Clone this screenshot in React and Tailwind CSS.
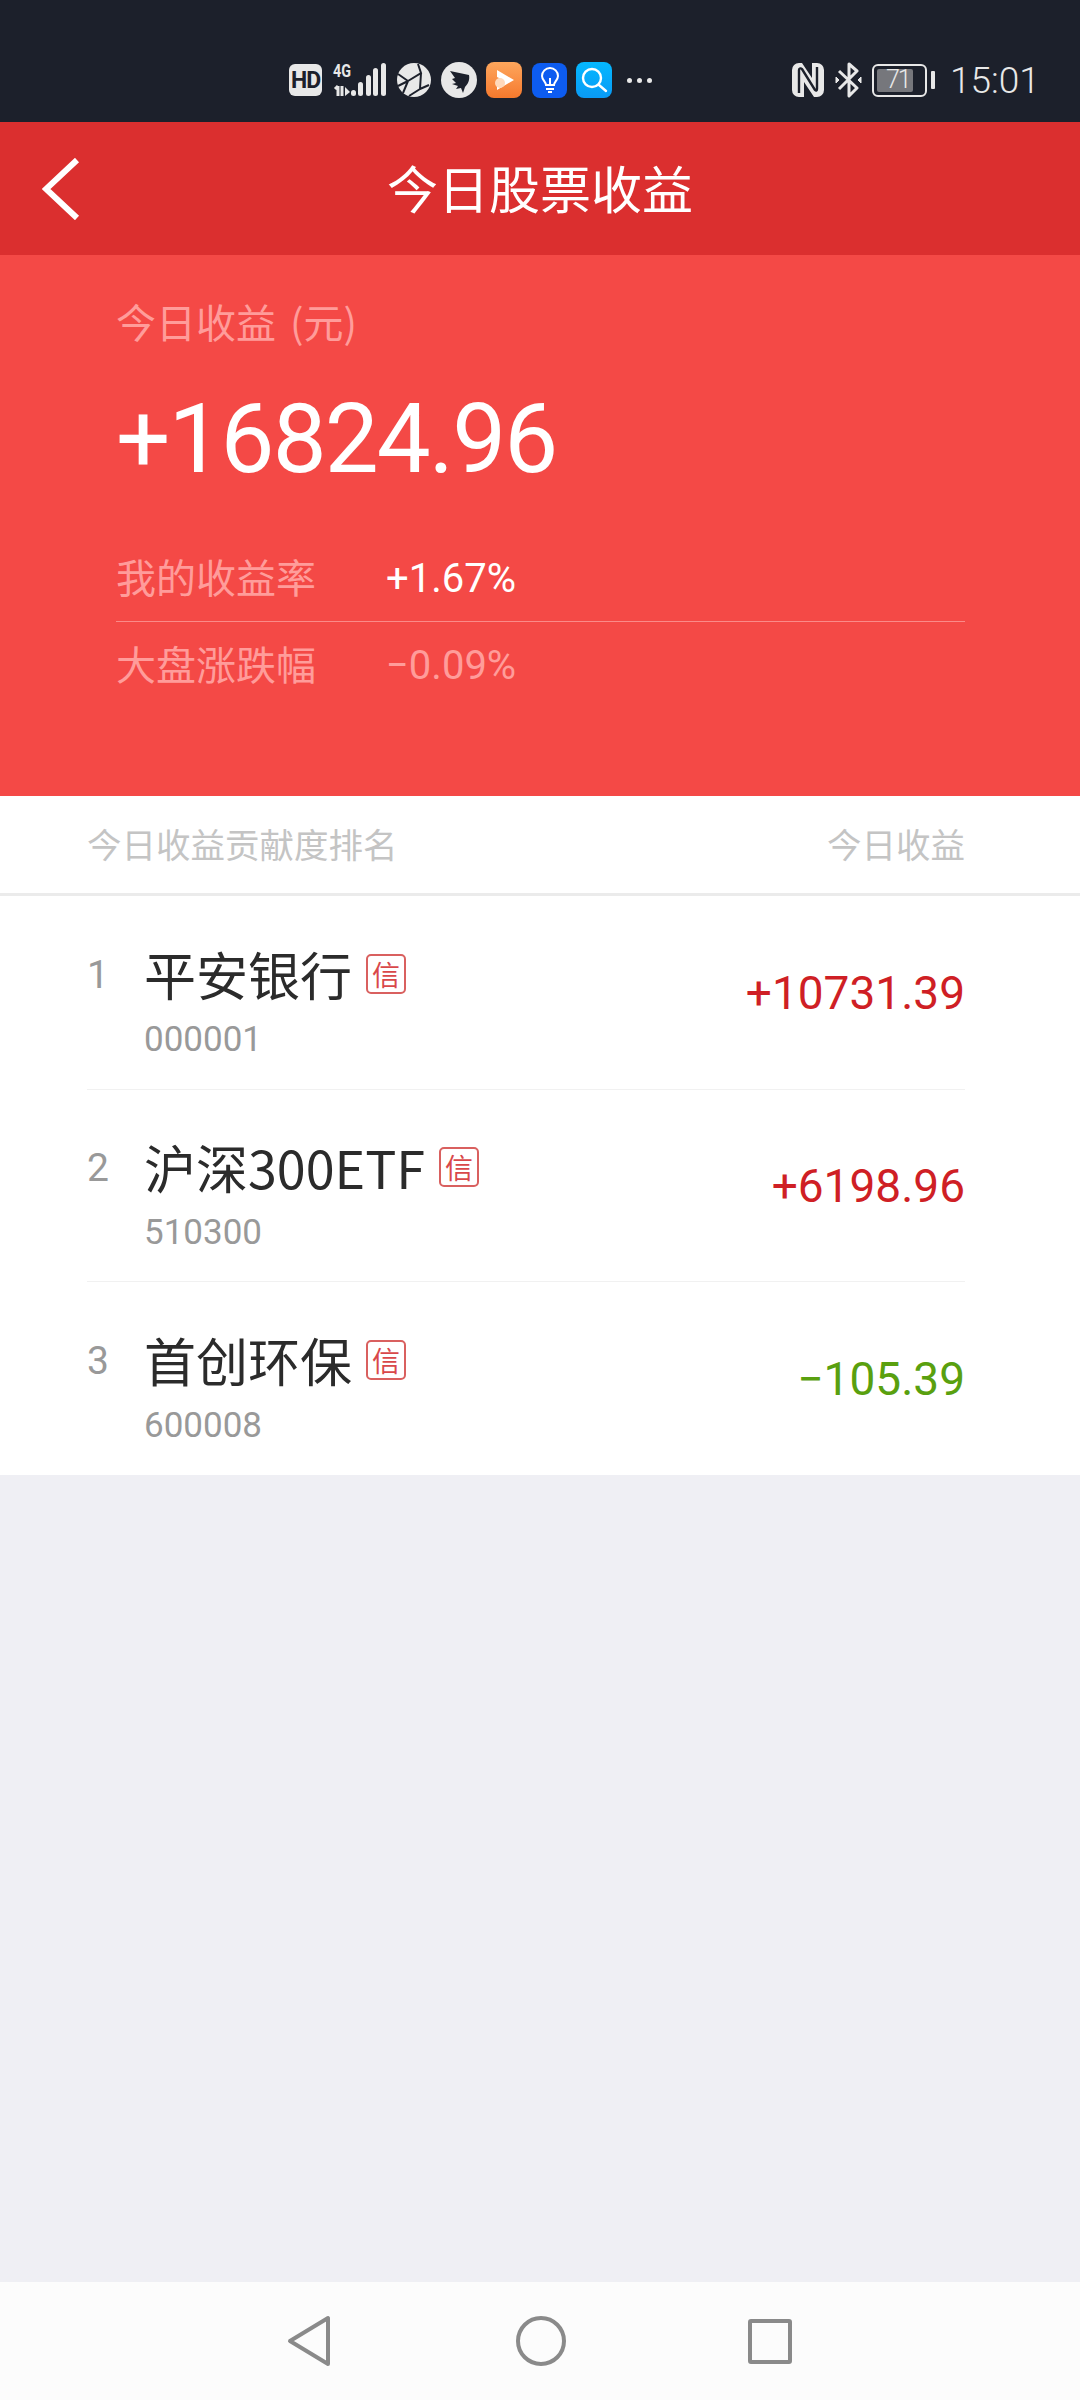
import React from 'react';

const CJK = { fontFamily: '"Noto Sans CJK SC", sans-serif' };

const STOCKS = [
  { rank: 1, name: '平安银行', code: '000001', amount: '+10731.39', color: 'text-[#cf1f25]', h: 'h-[194px]' },
  { rank: 2, name: '沪深300ETF', code: '510300', amount: '+6198.96', color: 'text-[#cf1f25]', h: 'h-[192px]' },
  { rank: 3, name: '首创环保', code: '600008', amount: '−105.39', color: 'text-[#59a00f]', h: 'h-[193px]' },
];

function StatusIcons() {
  return (
    <div className="flex items-center">
      {/* HD */}
      <div className="w-[33px] h-[32px] rounded-[6px] bg-[#e8e8e8] flex items-center justify-center text-[#1c202b] text-[23px] font-bold leading-none tracking-[-1px] font-['Roboto',sans-serif]">HD</div>
      {/* 4G + signal */}
      <svg width="54" height="36" viewBox="0 0 54 36" className="ml-[11px] overflow-visible">
        <text x="0" y="15" fontSize="19" fontWeight="700" fill="#e8e8e8" fontFamily="Roboto, sans-serif" textLength="18" lengthAdjust="spacingAndGlyphs">4G</text>
        <path d="M5 24v10M2 27l3-3" stroke="#e8e8e8" strokeWidth="3" fill="none" />
        <path d="M9 24v10" stroke="#e8e8e8" strokeWidth="3" fill="none" />
        <path d="M12 25l5 5-5 4z" fill="#e8e8e8" />
        <g fill="#e8e8e8">
          <rect x="18" y="28" width="5" height="6" rx="2.5" />
          <rect x="25" y="20" width="5" height="14" rx="2.5" />
          <rect x="33" y="13" width="5" height="21" rx="2.5" />
          <rect x="40" y="6" width="5" height="28" rx="2.5" />
          <rect x="48" y="1" width="5" height="33" rx="2.5" />
        </g>
      </svg>
      {/* globe */}
      <svg width="34" height="34" viewBox="0 0 34 34" className="ml-[10px]">
        <circle cx="17" cy="17" r="17" fill="#e8e8e8" />
        <path d="M1 11l10 7-5 12M11 18L24 10l-3-9M24 10l-1 16-11 7M23 26l9-4M11 18l-10 5" stroke="#1c202b" strokeWidth="2" fill="none" />
      </svg>
      {/* wing */}
      <svg width="36" height="36" viewBox="0 0 36 36" className="ml-[10px]">
        <circle cx="18" cy="18" r="18" fill="#e8e8e8" />
        <path d="M9 9l19 4c1 5-1 9-4 12l-2 6-2-5-5 1 2-3-6-2 4-1-4-4 3-1z" fill="#1c202b" />
      </svg>
      {/* orange app */}
      <div className="ml-[9px] w-[36px] h-[36px] rounded-[8px] bg-gradient-to-b from-[#fda65c] to-[#f5792c] flex items-center justify-center">
        <svg width="24" height="24" viewBox="0 0 24 24">
          <path d="M5 2l17 10-17 10v-7l6-3-6-3z" fill="#fff" />
          <circle cx="8" cy="15" r="5" fill="#ffd9bb" />
        </svg>
      </div>
      {/* blue bulb */}
      <div className="ml-[10px] w-[35px] h-[35px] rounded-[8px] bg-[#0d5cf0] flex items-center justify-center">
        <svg width="24" height="26" viewBox="0 0 24 26" fill="none" stroke="#fff" strokeWidth="2">
          <path d="M8 18c0-3-4-5-4-9a8 8 0 0 1 16 0c0 4-4 6-4 9z" />
          <path d="M8 22h8M10 25h4M12 11v7" />
        </svg>
      </div>
      {/* cyan search */}
      <div className="ml-[9px] w-[36px] h-[36px] rounded-[8px] bg-gradient-to-b from-[#05b8ff] to-[#0a9af5] flex items-center justify-center">
        <svg width="28" height="28" viewBox="0 0 28 28" fill="none" stroke="#fff" strokeWidth="2.4" strokeLinecap="round">
          <circle cx="12" cy="12" r="9" />
          <path d="M19 19l7 6" />
        </svg>
      </div>
      {/* overflow dots */}
      <div className="ml-[15px] flex gap-[5px]">
        <span className="w-[5px] h-[5px] rounded-full bg-[#e8e8e8]" />
        <span className="w-[5px] h-[5px] rounded-full bg-[#e8e8e8]" />
        <span className="w-[5px] h-[5px] rounded-full bg-[#e8e8e8]" />
      </div>
    </div>
  );
}

function StatusRight() {
  return (
    <div className="flex items-center">
      {/* nfc */}
      <svg width="32" height="34" viewBox="0 0 32 34">
        <path d="M7 0h3l10 15v-15h5a7 7 0 0 1 7 7v20a7 7 0 0 1-7 7h-3l-10-15v15h-5a7 7 0 0 1-7-7v-20a7 7 0 0 1 7-7z" fill="#e8e8e8" />
        <path d="M7 30V7c0-2 2-2 3-1l13 21c1 1 2 1 2-1V4" stroke="#1c202b" strokeWidth="2.4" fill="none" />
      </svg>
      {/* bluetooth */}
      <svg width="27" height="36" viewBox="0 0 27 36" fill="none" stroke="#e8e8e8" strokeWidth="3" className="ml-[11px]" strokeLinejoin="round">
        <path d="M4 9l18 17-8 8V2l8 7L4 27" />
        <path d="M1 15v6l3-3zM26 15v6l-3-3z" fill="#e8e8e8" strokeWidth="1" />
      </svg>
      {/* battery */}
      <div className="ml-[10px] w-[55px] h-[33px] rounded-[6px] border-[2.5px] border-[#e8e8e8] p-[3px]">
        <div className="relative w-[36px] h-full rounded-[2px] bg-[#76777c]">
          <span className="absolute left-[9px] -top-[2px] text-[25px] leading-[26px] tracking-[-2px] text-[#e8e8e8] font-['Roboto',sans-serif] font-light">71</span>
        </div>
      </div>
      <div className="ml-[4px] w-[4px] h-[18px] rounded-[1px] bg-[#e8e8e8]" />
      <span className="ml-[15px] mr-[44px] w-[86px] text-[37px] leading-none text-[#e8e8e8] font-['Roboto',sans-serif] font-light whitespace-nowrap">15:01</span>
    </div>
  );
}

function Badge() {
  return (
    <span className="w-[40px] h-[40px] rounded-[5px] border-2 border-[#d9605f] text-[#d9484a] text-[28px] leading-none flex items-center justify-center shrink-0">信</span>
  );
}

function StockRow({ item, last }) {
  return (
    <div className={`${item.h} ml-[87px] mr-[115px] flex items-center ${last ? '' : 'border-b border-[#f1f1f1]'}`}>
      <div className="flex-1 min-w-0 pt-[23px]">
        <div className="flex items-center h-[50px]">
          <span className="w-[57px] pt-[3px] text-[39px] leading-none text-[#999999] font-['Roboto',sans-serif]">{item.rank}</span>
          <span className="text-[52px] leading-none text-[#2b2b2b]">{item.name}</span>
          <span className="ml-[14px]"><Badge /></span>
        </div>
        <div className="pl-[57px] mt-[21px] text-[35px] leading-[40px] text-[#999999] font-['Roboto',sans-serif]">{item.code}</div>
      </div>
      <span className={`text-[46px] leading-none font-['Roboto',sans-serif] ${item.color}`}>{item.amount}</span>
    </div>
  );
}

export default function App() {
  return (
    <div className="w-[1080px] h-[2400px] flex flex-col bg-[#efeff4] overflow-hidden" style={CJK}>
      <div className="h-[122px] shrink-0 bg-[#1c202b] flex items-center justify-between pl-[289px] pt-[38px]">
        <StatusIcons />
        <StatusRight />
      </div>

      <div className="h-[133px] shrink-0 bg-[#db2f2f] grid grid-cols-[1fr_auto_1fr] items-center pl-[42px]">
        <svg width="38" height="62" viewBox="0 0 38 62" fill="none" stroke="#fff" strokeWidth="6">
          <path d="M35 2L4 31l31 29" />
        </svg>
        <h1 className="text-[51px] leading-none text-white font-normal -ml-[42px] pb-[2px]">今日股票收益</h1>
        <div />
      </div>

      <div className="h-[541px] shrink-0 bg-[#f44946] pl-[116px] pr-[115px] pt-[42px]">
        <p className="text-[40px] leading-[48px] text-[#ff9c9a] [word-spacing:5px]">今日收益 (元)</p>
        <p className="mt-[39px] text-[96px] leading-[110px] tracking-[-1.9px] text-white font-['Roboto',sans-serif]">+16824.96</p>
        <div className="mt-[40px] h-[88px] pb-[3px] flex items-center border-b border-[#fb8a88]">
          <span className="w-[270px] text-[40px] leading-none text-[#ff9c9a]">我的收益率</span>
          <span className="pt-[5px] text-[40px] leading-none text-white font-['Roboto',sans-serif]">+1.67%</span>
        </div>
        <div className="h-[82px] flex items-center">
          <span className="w-[270px] text-[40px] leading-none text-[#ff9c9a]">大盘涨跌幅</span>
          <span className="pt-[5px] text-[40px] leading-none text-[#ff9c9a] font-['Roboto',sans-serif]">−0.09%</span>
        </div>
      </div>

      <div className="h-[100px] shrink-0 bg-white border-b-[3px] border-[#ebebeb] pl-[87px] pr-[115px] pb-[2px] flex items-center justify-between text-[34.5px] leading-none text-[#c4c4c4]">
        <span>今日收益贡献度排名</span>
        <span>今日收益</span>
      </div>

      <div className="bg-white shrink-0">
        {STOCKS.map((s, i) => <StockRow key={s.code} item={s} last={i === STOCKS.length - 1} />)}
      </div>

      <div className="flex-1" />

      <div className="h-[118px] shrink-0 bg-[#fcfcfc] flex items-center justify-center gap-[182px] pr-[2px]">
        <svg width="44" height="52" viewBox="0 0 44 52" fill="none" stroke="#8a8a8a" strokeWidth="4" strokeLinejoin="round">
          <path d="M3 26L41 3v46z" />
        </svg>
        <svg width="50" height="50" viewBox="0 0 50 50" fill="none" stroke="#8a8a8a" strokeWidth="4" className="ml-[3px]">
          <circle cx="25" cy="25" r="23" />
        </svg>
        <svg width="44" height="45" viewBox="0 0 44 45" fill="none" stroke="#8a8a8a" strokeWidth="4" strokeLinejoin="round">
          <rect x="2" y="2" width="40" height="41" rx="1" />
        </svg>
      </div>
    </div>
  );
}
